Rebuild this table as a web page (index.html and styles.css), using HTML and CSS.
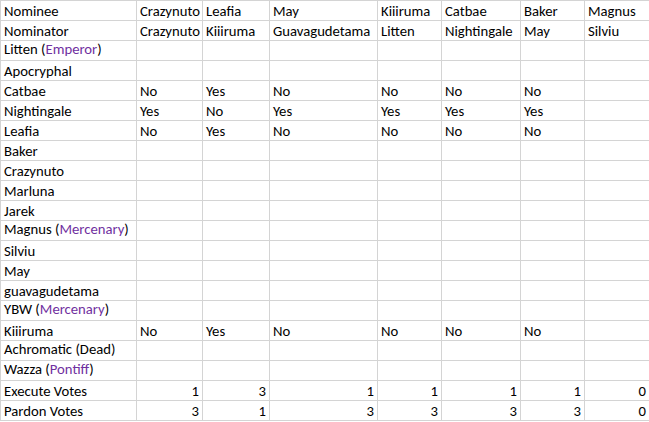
FILE: index.html
```html
<!DOCTYPE html>
<html>
<head>
<meta charset="utf-8">
<link rel="stylesheet" href="styles.css">
</head>
<body>
<div class="sheet">
  <div class="c">Nominee</div><div class="c">Crazynuto</div><div class="c">Leafia</div><div class="c">May</div><div class="c">Kiiiruma</div><div class="c">Catbae</div><div class="c">Baker</div><div class="c">Magnus</div>
  <div class="c">Nominator</div><div class="c">Crazynuto</div><div class="c">Kiiiruma</div><div class="c">Guavagudetama</div><div class="c">Litten</div><div class="c">Nightingale</div><div class="c">May</div><div class="c">Silviu</div>
  <div class="c up">Litten (<span class="role">Emperor</span>)</div><div class="c"></div><div class="c"></div><div class="c"></div><div class="c"></div><div class="c"></div><div class="c"></div><div class="c"></div>
  <div class="c">Apocryphal</div><div class="c"></div><div class="c"></div><div class="c"></div><div class="c"></div><div class="c"></div><div class="c"></div><div class="c"></div>
  <div class="c">Catbae</div><div class="c">No</div><div class="c">Yes</div><div class="c">No</div><div class="c">No</div><div class="c">No</div><div class="c">No</div><div class="c"></div>
  <div class="c">Nightingale</div><div class="c">Yes</div><div class="c">No</div><div class="c">Yes</div><div class="c">Yes</div><div class="c">Yes</div><div class="c">Yes</div><div class="c"></div>
  <div class="c">Leafia</div><div class="c">No</div><div class="c">Yes</div><div class="c">No</div><div class="c">No</div><div class="c">No</div><div class="c">No</div><div class="c"></div>
  <div class="c">Baker</div><div class="c"></div><div class="c"></div><div class="c"></div><div class="c"></div><div class="c"></div><div class="c"></div><div class="c"></div>
  <div class="c">Crazynuto</div><div class="c"></div><div class="c"></div><div class="c"></div><div class="c"></div><div class="c"></div><div class="c"></div><div class="c"></div>
  <div class="c">Marluna</div><div class="c"></div><div class="c"></div><div class="c"></div><div class="c"></div><div class="c"></div><div class="c"></div><div class="c"></div>
  <div class="c">Jarek</div><div class="c"></div><div class="c"></div><div class="c"></div><div class="c"></div><div class="c"></div><div class="c"></div><div class="c"></div>
  <div class="c up">Magnus (<span class="role">Mercenary</span>)</div><div class="c"></div><div class="c"></div><div class="c"></div><div class="c"></div><div class="c"></div><div class="c"></div><div class="c"></div>
  <div class="c">Silviu</div><div class="c"></div><div class="c"></div><div class="c"></div><div class="c"></div><div class="c"></div><div class="c"></div><div class="c"></div>
  <div class="c">May</div><div class="c"></div><div class="c"></div><div class="c"></div><div class="c"></div><div class="c"></div><div class="c"></div><div class="c"></div>
  <div class="c">guavagudetama</div><div class="c"></div><div class="c"></div><div class="c"></div><div class="c"></div><div class="c"></div><div class="c"></div><div class="c"></div>
  <div class="c up">YBW (<span class="role">Mercenary</span>)</div><div class="c"></div><div class="c"></div><div class="c"></div><div class="c"></div><div class="c"></div><div class="c"></div><div class="c"></div>
  <div class="c">Kiiiruma</div><div class="c">No</div><div class="c">Yes</div><div class="c">No</div><div class="c">No</div><div class="c">No</div><div class="c">No</div><div class="c"></div>
  <div class="c up">Achromatic (Dead)</div><div class="c"></div><div class="c"></div><div class="c"></div><div class="c"></div><div class="c"></div><div class="c"></div><div class="c"></div>
  <div class="c up">Wazza (<span class="role">Pontiff</span>)</div><div class="c"></div><div class="c"></div><div class="c"></div><div class="c"></div><div class="c"></div><div class="c"></div><div class="c"></div>
  <div class="c">Execute Votes</div><div class="c n">1</div><div class="c n">3</div><div class="c n">1</div><div class="c n">1</div><div class="c n">1</div><div class="c n">1</div><div class="c n">0</div>
  <div class="c">Pardon Votes</div><div class="c n">3</div><div class="c n">1</div><div class="c n">3</div><div class="c n">3</div><div class="c n">3</div><div class="c n">3</div><div class="c n">0</div>
</div>
</body>
</html>
```
FILE: styles.css
```css
html, body {
  margin: 0;
  padding: 0;
  overflow: hidden;
  background: #ffffff;
}
.sheet {
  display: grid;
  grid-template-columns: 135px 65px 66px 107px 63px 78px 63px 64px;
  grid-auto-rows: 19px;
  gap: 1px;
  padding: 1px 0 1px 1px;
  background: #d4d4d4;
  width: max-content;
  font-family: "Carlito", "Calibri", "Lato", sans-serif;
  font-size: 14.7px;
  color: #000000;
}
.c {
  background: #ffffff;
  padding: 0 3px 1px 3px;
  display: flex;
  align-items: flex-end;
  white-space: nowrap;
  line-height: 15px;
  overflow: visible;
}
.c.up {
  padding-bottom: 3px;
}
.c.n {
  justify-content: flex-end;
}
.role {
  color: #7030a0;
}
```
